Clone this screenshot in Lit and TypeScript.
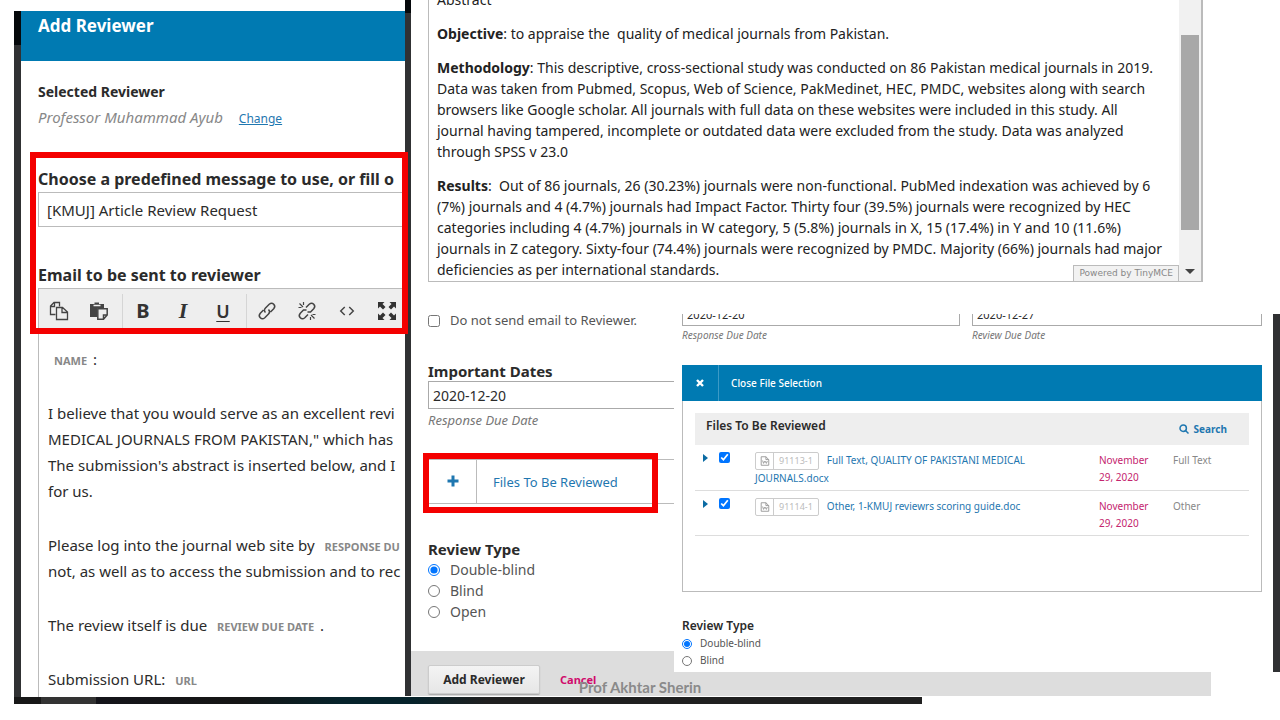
import { LitElement, html, css, svg } from "lit";
import { customElement } from "lit/decorators.js";

const base = css`
  * { box-sizing: border-box; }
  :host { display: block; box-sizing: border-box; font-family: "Noto Sans", sans-serif; color: #2b2b2b; }
  h1, h2, h3, p { margin: 0; }
  a { color: #1f77b0; text-decoration: none; }
  button { font: inherit; color: inherit; background: none; border: 0; padding: 0; margin: 0; }
  input, select { font: inherit; color: inherit; margin: 0; border-radius: 0; }
  em { color: #777; }
`;

const icon = (body: unknown, size = 20) =>
  html`<svg width=${size} height=${size} viewBox="0 0 20 20" fill="none" stroke="#444" stroke-width="1.5" aria-hidden="true">${body}</svg>`;

const icons = {
  copy: svg`<path d="M6.500 13.500H1.500V5L5 1.500H10.500V5.500M1.500 5.500H5.500V1.500" stroke-width="1.300"/><path d="M7.500 18.500V6.500H13.500L18.500 11V18.500ZM13 6.500V11.500H18.500" stroke-width="1.300"/>`,
  paste: svg`<path d="M1 3H5.500V1.500H10V3H15V7H8V16H1Z" fill="#444" stroke="none"/><path d="M4.500 4.500H11.500" stroke="#eee"/><path d="M8.800 7.800H18.200V14L14.500 18.200H8.800ZM14.500 18V14H18"/>`,
  link: svg`<path d="M8.500 11.500C7 10 7.200 8.300 8.500 7L12.200 3.300C15.500 .500 19.500 4.500 16.700 7.800L13.500 11M11.500 8.500C13 10 12.800 11.700 11.500 13L7.800 16.700C4.500 19.500 .500 15.500 3.300 12.200L6.500 9"/>`,
  unlink: svg`<path d="M9 6.500L12.200 3.300C15.500 .500 19.500 4.500 16.700 7.800L13.500 11H10.500M11 13.500L7.800 16.700C4.500 19.500 .500 15.500 3.300 12.200L6.500 9H9.500"/><path d="M2.500 2.500L6 6M6.500 1V4M1.500 6.500H4.500M14 14L17.500 17.500M13.500 16V19M15.500 13.500H18.500" stroke-width="1.200"/>`,
  code: svg`<path d="M7.500 5.500L3 10L7.500 14.500M12.500 5.500L17 10L12.500 14.500" stroke-width="1.600"/>`,
  full: svg`<path d="M1 1H7.500L5.500 3L8.500 6L6 8.500L3 5.500L1 7.500ZM19 1V7.500L17 5.500L14 8.500L11.500 6L14.500 3L12.500 1ZM1 19V12.500L3 14.500L6 11.500L8.500 14L5.500 17L7.500 19ZM19 19H12.500L14.500 17L11.500 14L14 11.500L17 14.500L19 12.500Z" fill="#333" stroke="none"/>`,
};

@customElement("message-window")
class MessageWindow extends LitElement {
  static styles = [base, css`
    :host { overflow: hidden; padding-left: 7px; background: linear-gradient(#05080b 34px, #303133 34px) left / 7px 100% no-repeat #fff; }
    .bar { background: #007ab2; color: #fff; height: 50px; padding: 3px 17px; }
    .title { font-size: 17px; line-height: 24px; }
    .body { min-width: 560px; padding: 20px 17px 0; white-space: nowrap; }
    .small { font-size: 14px; line-height: 22px; }
    .who { display: flex; gap: 16px; align-items: baseline; font-size: 15px; line-height: 28px; height: 30px; }
    .who em { color: #888; }
    .who a { font-size: 12px; text-decoration: underline; }
    .label { display: block; font-size: 16px; font-weight: 700; line-height: 26px; }
    .first { margin-top: 33px; }
    .second { margin-top: 35px; }
    select { appearance: none; display: block; width: 100%; height: 35px; padding: 0 8px; border: 1px solid #bbb; background: #fff; font-size: 15px; }
    .editor { border: 1px solid #bbb; border-bottom: 0; }
    .tools { display: flex; background: #eee; height: 41px; padding: 5px 0 0; border-bottom: 1px solid #ccc; }
    .group { display: flex; padding-right: 3px; border-right: 1px solid #d5d5d5; }
    .group:last-child { border: 0; }
    .tools button { width: 40px; height: 33px; display: flex; align-items: center; justify-content: center; color: #333; }
    .tools .b { font-size: 20px; font-weight: 700; }
    .tools .i { font: italic 700 22px "Liberation Serif", serif; }
    .tools .u { font-size: 18px; font-weight: 600; text-decoration: underline; text-underline-offset: 3px; }
    .mail { padding: 16px 9px 5px; font-size: 15px; line-height: 26px; }
    .mail p + p { margin-top: 28px; }
    .tag { font-size: 11px; line-height: 11px; font-weight: 700; color: #888; padding: 0 6px; }
  `];
  render() {
    return html`
      <div class="bar"><h1 class="title">Add Reviewer</h1></div>
      <div class="body">
        <h2 class="small">Selected Reviewer</h2>
        <div class="who"><em>Professor Muhammad Ayub</em><a href="#">Change</a></div>
        <label class="label first" for="template">Choose a predefined message to use, or fill o</label>
        <select id="template"><option>[KMUJ] Article Review Request</option></select>
        <h2 class="label second">Email to be sent to reviewer</h2>
        <div class="editor">
          <div class="tools">
            <div class="group">
              <button aria-label="Copy">${icon(icons.copy)}</button>
              <button aria-label="Paste">${icon(icons.paste)}</button>
            </div>
            <div class="group">
              <button class="b">B</button><button class="i">I</button><button class="u">U</button>
            </div>
            <div class="group">
              <button aria-label="Insert link">${icon(icons.link)}</button>
              <button aria-label="Remove link">${icon(icons.unlink)}</button>
              <button aria-label="Source code">${icon(icons.code, 18)}</button>
              <button aria-label="Fullscreen">${icon(icons.full)}</button>
            </div>
          </div>
          <div class="mail">
            <p><span class="tag">NAME</span>:</p>
            <p>I believe that you would serve as an excellent revi<br>MEDICAL JOURNALS FROM PAKISTAN," which has<br>The submission's abstract is inserted below, and I<br>for us.</p>
            <p>Please log into the journal web site by <span class="tag">RESPONSE DU</span><br>not, as well as to access the submission and to rec</p>
            <p>The review itself is due <span class="tag">REVIEW DUE DATE</span>.</p>
            <p>Submission URL: <span class="tag">URL</span></p>
          </div>
        </div>
      </div>`;
  }
}

@customElement("form-window")
class FormWindow extends LitElement {
  static styles = [base, css`
    :host { padding-left: 6px; background: linear-gradient(#05080b 13px, #303133 13px) left / 6px 100% no-repeat #fff; }
    .body { padding: 0 8px 0 17px; }
    .editor { display: flex; height: 282px; border: 1px solid #bbb; border-width: 0 2px 1px 1px; position: relative; }
    .scroll { flex: 1; height: 281px; overflow: hidden; display: flex; flex-direction: column; justify-content: flex-end; gap: 13px; padding: 0 14px 1px 8px; font-size: 14px; line-height: 21px; color: #222; }
    .scroll p { flex: none; }
    .track { width: 22px; background: #f1f1f1; padding: 35px 2px 7px; display: flex; flex-direction: column; justify-content: space-between; align-items: center; }
    .thumb { width: 18px; height: 195px; background: #a8a8a8; }
    .arrow { border: 5px solid transparent; border-top-color: #444; border-bottom: 0; }
    .powered { position: absolute; right: 22px; bottom: 0; height: 16px; padding: 0 5px; border: 1px solid #bbb; border-bottom: 0; background: #f2f2f2; color: #888; font: 9px/15px "DejaVu Sans", sans-serif; }
    .check { display: flex; align-items: center; gap: 10px; font-size: 14px; line-height: 21px; color: #555; }
    .check input { width: 12px; height: 12px; }
    .nomail { margin-top: 28px; font-size: 13px; }
    .label { display: block; font-size: 15px; font-weight: 700; line-height: 20px; }
    .dates { margin-top: 30px; }
    .dates input { display: block; width: 100%; height: 28px; margin-bottom: 1px; padding: 0 4px; border: 1px solid #aaa; font-size: 14px; }
    .hint { display: block; font-size: 13px; line-height: 20px; }
    .files { display: flex; height: 45px; margin-top: 29px; border: 1px solid #bbb; align-items: stretch; font-size: 13px; }
    .files button { width: 48px; border-right: 1px solid #bbb; }
    .files a { padding: 0 16px; align-self: center; }
    .type { margin: 35px 0 0; padding: 0; border: 0; }
    .type legend { padding: 0; }
    .foot { display: flex; align-items: center; gap: 20px; height: 45px; margin-top: 29px; padding: 12px 17px 0; background: #ddd; font-size: 12px; font-weight: 700; }
    .foot button { width: 112px; height: 29px; background: linear-gradient(#f4f4f4, #e6e6e6); border: 1px solid #ccc; border-radius: 2px; box-shadow: 0 1px 1px #aaa; }
    .foot a { color: #d00a6c; font-size: 11px; }
  `];
  render() {
    return html`
      <div class="body">
        <div class="editor">
          <div class="scroll">
            <p>Abstract</p>
            <p><b>Objective</b>: to appraise the &nbsp;quality of medical journals from Pakistan.</p>
            <p><b>Methodology</b>: This descriptive, cross-sectional study was conducted on 86 Pakistan medical journals in 2019. Data was taken from Pubmed, Scopus, Web of Science, PakMedinet, HEC, PMDC, websites along with search browsers like Google scholar. All journals with full data on these websites were included in this study. All journal having tampered, incomplete or outdated data were excluded from the study. Data was analyzed through SPSS v 23.0</p>
            <p><b>Results</b>: &nbsp;Out of 86 journals, 26 (30.23%) journals were non-functional. PubMed indexation was achieved by 6 (7%) journals and 4 (4.7%) journals had Impact Factor. Thirty four (39.5%) journals were recognized by HEC categories including 4 (4.7%) journals in W category, 5 (5.8%) journals in X, 15 (17.4%) in Y and 10 (11.6%) journals in Z category. Sixty-four (74.4%) journals were recognized by PMDC. Majority (66%) journals had major deficiencies as per international standards.</p>
          </div>
          <div class="track"><div class="thumb"></div><div class="arrow"></div></div>
          <div class="powered">Powered by TinyMCE</div>
        </div>
        <label class="check nomail"><input type="checkbox">Do not send email to Reviewer.</label>
        <div class="dates">
          <label class="label" for="due">Important Dates</label>
          <input id="due" type="text" value="2020-12-20">
          <em class="hint">Response Due Date</em>
        </div>
        <div class="files">
          <button aria-label="Add files"><svg width="12" height="12" viewBox="0 0 12 12"><path d="M4.500 0.500H7.500V4.500H11.500V7.500H7.500V11.500H4.500V7.500H.500V4.500H4.500Z" fill="#1f77b0"/></svg></button>
          <a href="#">Files To Be Reviewed</a>
        </div>
        <fieldset class="type">
          <legend class="label">Review Type</legend>
          <label class="check"><input type="radio" name="type" checked>Double-blind</label>
          <label class="check"><input type="radio" name="type">Blind</label>
          <label class="check"><input type="radio" name="type">Open</label>
        </fieldset>
      </div>
      <div class="foot"><button>Add Reviewer</button><a href="#">Cancel</a></div>`;
  }
}

const files = [
  { id: "91113-1", name: "Full Text, QUALITY OF PAKISTANI MEDICAL JOURNALS.docx", kind: "Full Text" },
  { id: "91114-1", name: "Other, 1-KMUJ reviewrs scoring guide.doc", kind: "Other" },
];

@customElement("files-window")
class FilesWindow extends LitElement {
  static styles = [base, css`
    :host { height: 358px; overflow: hidden; background: #fff; border-right: 7px solid #303133; padding: 0 11px 3px 8px; display: flex; flex-direction: column; justify-content: flex-end; font-size: 10px; }
    .dates { display: grid; grid-template-columns: 278fr 290fr; gap: 12px; flex: none; }
    .dates input { display: block; width: 100%; height: 24px; padding: 0 4px; border: 1px solid #aaa; font-size: 11px; }
    .dates em { display: block; line-height: 18px; }
    .bar { display: flex; align-items: stretch; height: 36px; margin-top: 21px; background: #007ab2; color: #fff; flex: none; }
    .bar button { width: 37px; border-right: 1px solid #3c9ac6; }
    .bar h2 { font-size: 10px; font-weight: 500; padding: 0 12px; line-height: 37px; }
    .panel { border: 1px solid #bbb; border-top: 0; padding: 12px 12px 55px; flex: none; }
    .head { display: flex; justify-content: space-between; background: #eee; height: 32px; padding: 0 22px 0 11px; }
    .head h3 { font-size: 12px; line-height: 26px; font-weight: 600; }
    .head a { display: flex; align-items: center; gap: 5px; font-weight: 700; font-size: 10px; }
    table { width: 100%; border-collapse: collapse; table-layout: fixed; }
    td { padding: 7px 0 3px; vertical-align: top; line-height: 17px; border-bottom: 1px solid #ddd; color: #888; }
    .pick { width: 60px; }
    .day { width: 74px; color: #c4246e; }
    .kind { width: 76px; }
    .text { padding-right: 60px; }
    .row { display: flex; align-items: center; gap: 11px; padding-left: 8px; }
    .row button { border: 4px solid transparent; border-left: 5px solid #0b6ba3; border-right: 0; height: 8px; }
    .row input { width: 11px; height: 11px; }
    .badge { display: inline-flex; vertical-align: top; border: 1px solid #ccc; border-radius: 2px; color: #bbb; height: 18px; margin-right: 8px; font-size: 9px; line-height: 16px; }
    .badge svg { width: 18px; height: 16px; border-right: 1px solid #ccc; }
    .badge span { padding: 0 5px; }
    .type { margin: 25px 0 0; padding: 0; border: 0; flex: none; }
    .type legend { padding: 0; font-size: 12px; font-weight: 600; line-height: 18px; }
    .type label { display: flex; align-items: center; gap: 8px; line-height: 17px; color: #555; }
    .type input { width: 10px; height: 10px; }
  `];
  render() {
    return html`
      <div class="dates">
        <label><input type="text" value="2020-12-20"><em>Response Due Date</em></label>
        <label><input type="text" value="2020-12-27"><em>Review Due Date</em></label>
      </div>
      <div class="bar">
        <button aria-label="Close"><svg width="8" height="8" viewBox="0 0 8 8"><path d="M1 1L7 7M7 1L1 7" stroke="#fff" stroke-width="2.400"/></svg></button>
        <h2>Close File Selection</h2>
      </div>
      <div class="panel">
        <div class="head">
          <h3>Files To Be Reviewed</h3>
          <a href="#"><svg width="10" height="10" viewBox="0 0 10 10" fill="none" stroke="#1f77b0" stroke-width="1.500"><circle cx="4.200" cy="4.200" r="3.200"/><path d="M6.500 6.500L9.500 9.500"/></svg>Search</a>
        </div>
        <table>
          <tbody>
            ${files.map((f) => html`<tr>
              <td class="pick"><div class="row"><button aria-label="Expand"></button><input type="checkbox" checked aria-label=${f.name}></div></td>
              <td class="text"><span class="badge"><svg viewBox="0 0 18 16" fill="none" stroke="#999"><path d="M5.500 3.500H10.500L13.500 6.500V12.500H5.500ZM10.500 3.500V6.500H13.500M7 7.500L8 10.500L9.500 8L11 10.500L12 8"/></svg><span>${f.id}</span></span><a href="#">${f.name}</a></td>
              <td class="day">November<br>29, 2020</td>
              <td class="kind">${f.kind}</td>
            </tr>`)}
          </tbody>
        </table>
      </div>
      <fieldset class="type">
        <legend>Review Type</legend>
        <label><input type="radio" name="t" checked>Double-blind</label>
        <label><input type="radio" name="t">Blind</label>
      </fieldset>`;
  }
}

@customElement("app-root")
class AppRoot extends LitElement {
  static styles = [base, css`
    :host { position: relative; background: #fff; overflow: hidden; min-height: 720px; }
    .shots { display: grid; grid-template-columns: 391fr 806fr 69fr; padding-left: 14px; align-items: start; }
    message-window { margin-top: 11px; min-width: 0; }
    .taskbar { width: 72%; height: 7px; padding-left: 14px; }
    .taskbar div { height: 7px; background: linear-gradient(90deg, #181818 3%, #333 3%, #333 9%, #14141a 9%, #151515 25%, #06232b 36%, #06232b 44%, #202020 52%); }
    files-window { position: absolute; left: 52.66%; right: 0; top: 314px; }
    .mark { position: absolute; border: 6px solid #f40000; }
    .message { left: 30px; top: 152px; width: 378px; height: 182px; }
    .attach { left: 423px; top: 453px; width: 235px; height: 60px; }
    .author { position: absolute; left: 0; right: 0; top: 677px; text-align: center; font: 700 15px/20px Lato, sans-serif; color: #8a8a8a; }
  `];
  render() {
    return html`
      <div class="shots"><message-window></message-window><form-window></form-window></div>
      <div class="taskbar"><div></div></div>
      <files-window></files-window>
      <div class="mark message"></div>
      <div class="mark attach"></div>
      <p class="author">Prof Akhtar Sherin</p>`;
  }
}
